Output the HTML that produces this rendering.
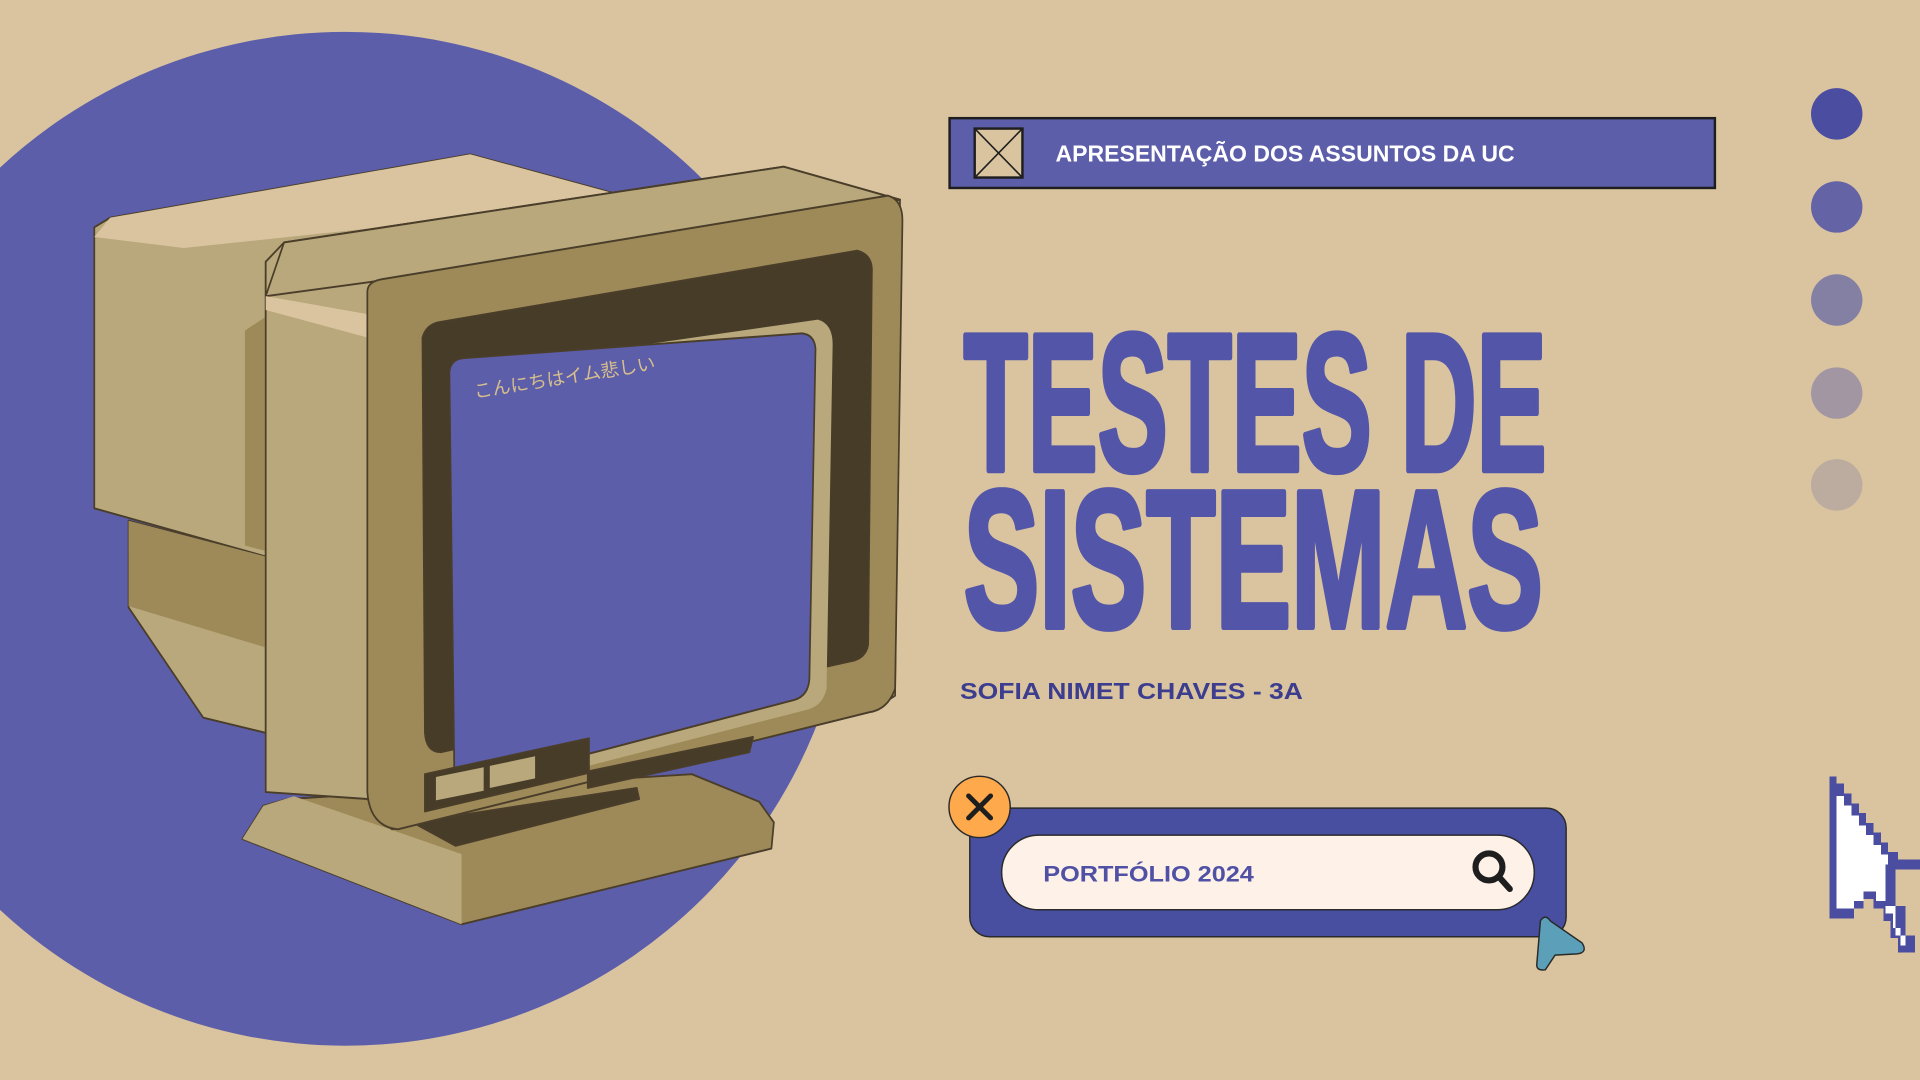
<!DOCTYPE html>
<html><head><meta charset="utf-8"><style>html,body{margin:0;padding:0;background:#d9c49f;overflow:hidden}svg{display:block}</style></head>
<body>
<svg width="1920" height="1080" viewBox="0 0 1568 882" xmlns="http://www.w3.org/2000/svg">
<rect width="1568" height="882" fill="#d9c49f"/>
<circle cx="282" cy="440" r="414" fill="#5d5ea9"/>
<g transform="scale(1,1.125)">
<g stroke="#4a3e2a" stroke-width="1.4" stroke-linejoin="round">
<polygon points="77,165 90,158 384,112 500,140 217,190 217,404 77,369" fill="#b9a87b"/>
<polygon points="90,158 384,112 500,140 300,166 150,180 77,172" fill="#d9c49f" stroke="none"/>
<polygon points="105,378 217,404 217,532 166,521 105,441" fill="#b9a87b"/>
<polygon points="105,378 217,404 217,470 105,440" fill="#9e8a58" stroke="none"/>
<polygon points="200,240 217,230 217,400 200,396" fill="#9e8a58" stroke="none"/>
<polygon points="198,609 215,585 235,580 565,562 620,582 632,597 630,616 377,671" fill="#9e8a58"/>
<polygon points="198,609 215,585 240,578 377,620 377,671" fill="#b9a87b" stroke="none"/>
<polygon points="337,597 372,614 522,580 520,572" fill="#463c28"/>
<polygon points="217,190 232,176 640,121 735,145 731,505 710,517 320,602 300,580 217,575" fill="#b9a87b"/>
<polygon points="232,176 640,121 735,145 300,205 217,215" fill="#b9a87b"/>
<polygon points="217,215 300,228 300,245 217,225" fill="#d9c49f" stroke="none"/>
<path d="M300,212 Q300,205 310,203 L725,142 Q737,145 737,160 L731,500 Q725,515 710,517 L325,602 Q302,600 300,575 Z" fill="#9e8a58"/>
<path d="M345,245 Q348,236 358,234 L700,182 Q713,185 712,198 L709,468 Q707,478 695,480 L360,546 Q348,546 347,532 Z" fill="#463c28"/>
<path d="M372,270 L668,232 Q680,235 680,250 L675,500 Q672,512 660,515 L384,578 Q374,575 373,565 Z" fill="#b9a87b" stroke="none"/>
<path d="M367,270 Q368,261 378,260 L655,242 Q665,243 666,253 L661,493 Q660,505 649,508 L383,570 Q373,572 371,560 Z" fill="#5d5ea9"/>
<polygon points="347,562 481,536 481,561 347,589" fill="#463c28"/>
<polygon points="356,564 395,557 395,574 356,581" fill="#b9a87b" stroke="none"/>
<polygon points="400,556 437,549 437,565 400,572" fill="#b9a87b" stroke="none"/>
<polygon points="480,560 615,535 612,546 480,572" fill="#463c28"/>
</g>
</g>
<text x="388" y="325" transform="rotate(-9 388 325)" font-family="'Liberation Sans','Noto Sans CJK JP',sans-serif" font-size="15" fill="#d6bf8c">こんにちはイム悲しい</text>

<rect x="775.5" y="96.5" width="625" height="57" fill="#5d5ea9" stroke="#1e1e1e" stroke-width="2"/>
<rect x="796" y="105" width="39" height="40" fill="#d9c49f" stroke="#1e1e1e" stroke-width="2"/>
<path d="M797,106 L834,144 M834,106 L797,144" stroke="#1e1e1e" stroke-width="1.3"/>
<text x="862" y="132" font-family="'Liberation Sans',sans-serif" font-weight="bold" font-size="19" fill="#fff" textLength="375" lengthAdjust="spacingAndGlyphs">APRESENTAÇÃO DOS ASSUNTOS DA UC</text>

<text x="787" y="384" font-family="'Liberation Sans',sans-serif" font-weight="bold" font-size="160" fill="#5355a8" stroke="#5355a8" stroke-width="5" stroke-linejoin="round" textLength="476" lengthAdjust="spacingAndGlyphs">TESTES DE</text>
<text x="787" y="512" font-family="'Liberation Sans',sans-serif" font-weight="bold" font-size="160" fill="#5355a8" stroke="#5355a8" stroke-width="5" stroke-linejoin="round" textLength="473" lengthAdjust="spacingAndGlyphs">SISTEMAS</text>
<text x="784" y="571" font-family="'Liberation Sans',sans-serif" font-weight="bold" font-size="19" fill="#3d3d8f" textLength="280" lengthAdjust="spacingAndGlyphs">SOFIA NIMET CHAVES - 3A</text>

<circle cx="1500" cy="93" r="21" fill="#4a4da0"/>
<circle cx="1500" cy="169" r="21" fill="#6463a6"/>
<circle cx="1500" cy="245" r="21" fill="#8480a3"/>
<circle cx="1500" cy="321" r="21" fill="#a296a3"/>
<circle cx="1500" cy="396" r="21" fill="#bcab9f"/>

<rect x="792" y="660" width="487" height="105" rx="16" fill="#484ea0" stroke="#2a2a2a" stroke-width="1.2"/>
<rect x="818" y="682" width="435" height="61" rx="30.5" fill="#fdf1e8" stroke="#2a2a2a" stroke-width="1.2"/>
<text x="852" y="720" font-family="'Liberation Sans',sans-serif" font-weight="bold" font-size="18" fill="#5050a5" textLength="172" lengthAdjust="spacingAndGlyphs">PORTFÓLIO 2024</text>
<circle cx="1216" cy="708" r="11" fill="none" stroke="#1e1e1e" stroke-width="5"/>
<line x1="1224" y1="716" x2="1233" y2="726" stroke="#1e1e1e" stroke-width="5" stroke-linecap="round"/>
<circle cx="800" cy="659" r="25" fill="#ffa94d" stroke="#2a2a2a" stroke-width="1.2"/>
<path d="M791,650 L809,668 M809,650 L791,668" stroke="#1e1e1e" stroke-width="4" stroke-linecap="round"/>
<path d="M1258,752 Q1262,746 1266,752 L1292,770 Q1297,778 1288,779 L1270,780 L1262,792 Q1255,793 1255,788 Z" fill="#5ba0b8" stroke="#2a2a2a" stroke-width="1.2"/>

<g shape-rendering="crispEdges">
<path d="M1494,634 L1500,634 L1500,640 L1506,640 L1506,648 L1512,648 L1512,656 L1518,656 L1518,664 L1524,664 L1524,672 L1530,672 L1530,680 L1536,680 L1536,688 L1542,688 L1542,696 L1550,696 L1550,702 L1568,702 L1568,710 L1548,710 L1548,740 L1556,740 L1556,764 L1564,764 L1564,778 L1550,778 L1550,766 L1544,766 L1544,752 L1538,752 L1538,742 L1530,742 L1530,734 L1522,734 L1522,742 L1514,742 L1514,750 L1494,750 Z" fill="#4a4da0"/>
<path d="M1500,650 L1506,650 L1506,658 L1512,658 L1512,666 L1518,666 L1518,674 L1524,674 L1524,682 L1530,682 L1530,690 L1536,690 L1536,698 L1542,698 L1542,706 L1540,706 L1540,740 L1548,740 L1548,764 L1556,764 L1556,772 L1552,772 L1552,758 L1546,758 L1546,746 L1540,746 L1540,736 L1532,736 L1532,728 L1522,728 L1522,736 L1514,736 L1514,742 L1500,742 Z" fill="#fff"/>
</g>
</svg>
</body></html>
